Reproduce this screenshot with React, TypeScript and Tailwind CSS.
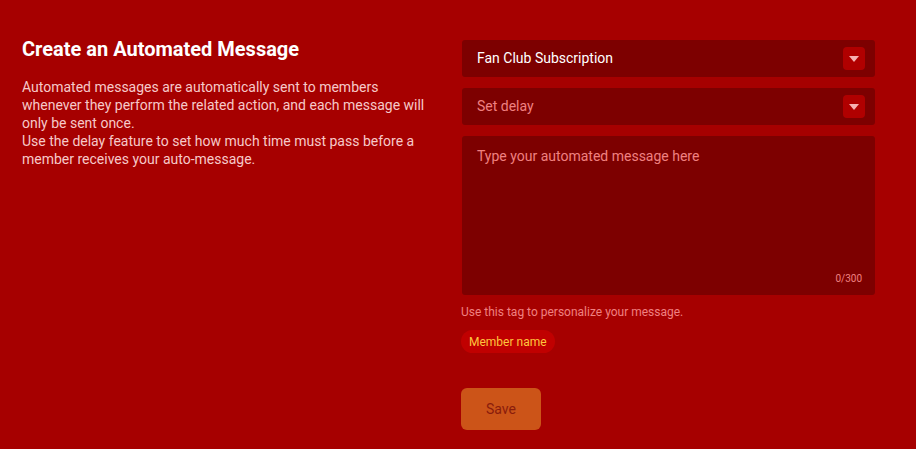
import React from 'react';

const Caret = () => (
  <span className="flex h-[23px] w-[22px] items-center justify-center rounded bg-[#b00000]">
    <svg width="10" height="6" viewBox="0 0 10 6">
      <path d="M0 0 L10 0 L5 6 Z" fill="#f7b0b0" />
    </svg>
  </span>
);

const App = () => {
  return (
    <div className="flex h-[449px] w-[916px] gap-[30px] bg-[#a60000] pl-[22px] pt-[40px] font-['Roboto',sans-serif]">
      <div className="w-[410px]">
        <h1 className="mb-[16px] mt-[-4px] text-[20px] font-bold leading-[26px] text-white">Create an Automated Message</h1>
        <p className="text-[14px] leading-[18px] text-[#f6c9c9]">
          Automated messages are automatically sent to members whenever they perform the related action, and each message will only be sent once.
          <br />
          Use the delay feature to set how much time must pass before a member receives your auto-message.
        </p>
      </div>
      <div className="flex w-[413px] flex-col">
        <div className="mb-[11px] flex h-[37px] items-center justify-between rounded-[3px] bg-[#7d0000] pl-[15px] pr-[10px]">
          <span className="text-[14px] text-white">Fan Club Subscription</span>
          <Caret />
        </div>
        <div className="mb-[11px] flex h-[37px] items-center justify-between rounded-[3px] bg-[#7d0000] pl-[15px] pr-[10px]">
          <span className="text-[14px] text-[#f08080]">Set delay</span>
          <Caret />
        </div>
        <div className="relative h-[159px] rounded-[3px] bg-[#7d0000] px-[15px] pt-[8px]">
          <span className="text-[14px] text-[#f08080]">Type your automated message here</span>
          <span className="absolute bottom-[9px] right-[13px] text-[10px] text-[#f08080]">0/300</span>
        </div>
        <div className="-ml-[1px] mt-[10px] text-[12px] leading-[14px] text-[#f08080]">Use this tag to personalize your message.</div>
        <div className="mt-[11px] flex">
          <span className="-ml-[1px] flex h-[23px] items-center rounded-full bg-[#c00000] px-[8px] text-[12px] text-[#ffc53d]">Member name</span>
        </div>
        <div className="mt-[35px] flex">
          <button className="-ml-[1px] h-[42px] w-[80px] rounded-[6px] bg-[#cc5418] text-[14px] text-[#8a1c0c]">Save</button>
        </div>
      </div>
    </div>
  );
};

export default App;
